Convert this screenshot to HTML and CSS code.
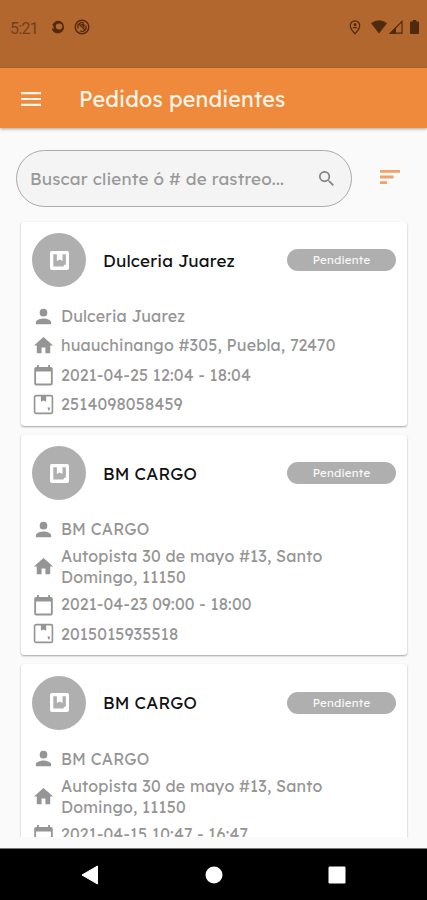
FILE: index.html
```html
<!DOCTYPE html>
<html lang="es">
<head>
<meta charset="utf-8">
<meta name="viewport" content="width=device-width, initial-scale=1">
<title>Pedidos pendientes</title>
<link rel="stylesheet" href="styles.css">
</head>
<body>
<svg class="defs" aria-hidden="true">
  <symbol id="box" viewBox="0 0 20 20"><path fill-rule="evenodd" d="M2 0H18Q20 0 20 2V18Q20 20 18 20H2Q0 20 0 18V2Q0 0 2 0ZM3.500 3.500V16.300H14L15 14.500H16.700V3.500H13.200V10.500L10.200 9L7.200 10.500V3.500Z"/></symbol>
  <symbol id="person" viewBox="0 0 24 24"><path d="M12 12a4 4 0 1 0 0-8 4 4 0 0 0 0 8zm0 2c-2.670 0-8 1.340-8 4v2h16v-2c0-2.660-5.330-4-8-4z"/></symbol>
  <symbol id="home" viewBox="0 0 24 24"><path d="M10 20v-6h4v6h5v-8h3L12 3 2 12h3v8z"/></symbol>
  <symbol id="calendar" viewBox="-.4 -1.200 24.800 24.800"><path d="M20 3h-1V1h-2v2H7V1H5v2H4a2 2 0 0 0-2 2v16a2 2 0 0 0 2 2h16a2 2 0 0 0 2-2V5a2 2 0 0 0-2-2zm0 18H4V8h16z"/></symbol>
  <symbol id="package" viewBox="0 0 24 24"><rect x="2.700" y="2.700" width="18.600" height="18.600" rx="1.500" fill="none" stroke="currentColor" stroke-width="1.700"/><path d="M9.300 3h5.500v6l-2.750-1.200L9.300 9zM16.200 15h2.800l-.9 3.200h-1z"/></symbol>
</svg>
<div class="screen">
  <header class="status">
    <span class="clock">5:21</span>
    <svg class="st-swirl" viewBox="0 0 14 14"><path fill-rule="evenodd" d="M1 4.500C3 4 3 1 7 .7c3 0 6 2.300 6 6.300s-3 6.300-6.500 6.300C3 13.300.8 10.500 1 8l2 1.500C2 7 3 5.500 1 4.500zM8 3.500a3.300 3 0 1 0 .1 6 3.300 3 0 0 0-.1-6z"/></svg>
    <svg class="st-sync" viewBox="0 0 16 16"><circle cx="8" cy="8" r="6.800" fill="none" stroke="currentColor" stroke-width="1.400"/><path d="M4.300 9.500a4 4 0 0 1 5.700-5.200M11.700 6.500a4 4 0 0 1-5.700 5.200M4.500 4.500l7 7" fill="none" stroke="currentColor" stroke-width="1.200"/><path d="M6.500 5h4v4z"/></svg>
    <svg class="st-pin" viewBox="0 0 12 15"><path d="M6 .8a4.700 4.700 0 0 0-4.700 4.800C1.300 9.200 6 13.800 6 13.800s4.700-4.600 4.700-8.200A4.700 4.700 0 0 0 6 .8z" fill="none" stroke="currentColor" stroke-width="1.200"/><circle cx="6" cy="4.700" r="1.400"/><path d="M3.600 8.300a2.500 2 0 0 1 4.800 0z"/></svg>
    <svg class="st-wifi" viewBox="0 0 16 14"><path d="M0 3.200Q8-2.600 16 3.200L8 13.500z"/></svg>
    <svg class="st-signal" viewBox="0 0 14 14"><path d="M1.500 13.200H13V1.300z" fill="none" stroke="currentColor" stroke-width="1.200"/><path d="M0 14L7 7v7z"/></svg>
    <svg class="st-battery" viewBox="0 0 9 14"><path d="M2.700 0h3.600v1.500H8q1 0 1 1V13q0 1-1 1H1q-1 0-1-1V2.500q0-1 1-1h1.700z"/></svg>
  </header>
  <div class="appbar">
    <svg class="menu" viewBox="0 0 20 14"><path d="M0 0h20v2.200H0zM0 5.900h20v2.200H0zM0 11.800h20V14H0z"/></svg>
    <h1 class="title">Pedidos pendientes</h1>
  </div>
  <main class="content">
    <div class="tools">
      <div class="search">
        <span class="placeholder">Buscar cliente ó # de rastreo...</span>
        <svg class="search-icon" viewBox="3 3 17.500 17.500"><path d="M15.500 14h-.79l-.28-.27a6.500 6.500 0 1 0-.7.7l.27.28v.79l5 4.990L20.490 19zM9.500 14a4.500 4.500 0 1 1 0-9 4.500 4.500 0 0 1 0 9z"/></svg>
      </div>
      <svg class="sort" viewBox="0 0 20 14"><path d="M0 0h20v2.800H0zM0 5.600h13.500v2.800H0zM0 11.200h7V14H0z"/></svg>
    </div>
    <div class="list">
      <article class="card">
        <div class="head">
          <div class="avatar"><svg><use href="#box"/></svg></div>
          <h2 class="name">Dulceria Juarez</h2>
          <span class="badge">Pendiente</span>
        </div>
        <div class="row"><svg><use href="#person"/></svg><span>Dulceria Juarez</span></div>
        <div class="row"><svg><use href="#home"/></svg><span>huauchinango #305, Puebla, 72470</span></div>
        <div class="row"><svg><use href="#calendar"/></svg><span>2021-04-25 12:04 - 18:04</span></div>
        <div class="row"><svg><use href="#package"/></svg><span>2514098058459</span></div>
      </article>
      <article class="card">
        <div class="head">
          <div class="avatar"><svg><use href="#box"/></svg></div>
          <h2 class="name">BM CARGO</h2>
          <span class="badge">Pendiente</span>
        </div>
        <div class="row"><svg><use href="#person"/></svg><span>BM CARGO</span></div>
        <div class="row"><svg><use href="#home"/></svg><span>Autopista 30 de mayo #13, Santo<br>Domingo, 11150</span></div>
        <div class="row"><svg><use href="#calendar"/></svg><span>2021-04-23 09:00 - 18:00</span></div>
        <div class="row"><svg><use href="#package"/></svg><span>2015015935518</span></div>
      </article>
      <article class="card">
        <div class="head">
          <div class="avatar"><svg><use href="#box"/></svg></div>
          <h2 class="name">BM CARGO</h2>
          <span class="badge">Pendiente</span>
        </div>
        <div class="row"><svg><use href="#person"/></svg><span>BM CARGO</span></div>
        <div class="row"><svg><use href="#home"/></svg><span>Autopista 30 de mayo #13, Santo<br>Domingo, 11150</span></div>
        <div class="row"><svg><use href="#calendar"/></svg><span>2021-04-15 10:47 - 16:47</span></div>
      </article>
    </div>
  </main>
  <nav class="navbar">
    <svg class="back" viewBox="0 0 20 20"><path d="M17.500 1v18L2 10z" stroke="#fff" stroke-linejoin="round"/></svg>
    <svg viewBox="0 0 20 20"><circle cx="10" cy="10" r="8.500"/></svg>
    <svg viewBox="0 0 20 20"><rect x="1.500" y="1.500" width="17" height="17" rx="1.200"/></svg>
  </nav>
</div>
</body>
</html>
```
FILE: styles.css
```css
* { box-sizing: border-box; }
body {
  margin: 0;
  background: #fafafa;
  font-family: Lexend, Inter, "Open Sans", sans-serif;
}
svg { display: block; fill: currentColor; flex: none; }
.defs { position: absolute; width: 0; height: 0; }
.screen { width: 427px; height: 900px; display: flex; flex-direction: column; overflow: hidden; }

.status {
  height: 68px;
  flex: none;
  display: flex;
  align-items: flex-start;
  padding: 20px 8px 0 10px;
  background: #b1672d;
  color: #51290f;
}
.clock { width: 41px; font: 16px/17px Roboto, sans-serif; letter-spacing: -.7px; color: #71401c; }
.st-swirl { width: 14px; height: 14px; }
.st-sync { width: 16px; height: 16px; margin: -1px 0 0 9px; }
.st-pin { width: 12px; height: 15px; margin-left: auto; }
.st-wifi { width: 16px; height: 14px; margin-left: 10px; }
.st-signal { width: 14px; height: 14px; margin-left: 2px; }
.st-battery { width: 9px; height: 14px; margin: 0 0 0 7px; }

.appbar {
  height: 60px;
  flex: none;
  display: flex;
  align-items: center;
  padding-left: 21px;
  background: #ef893b;
  color: #fff5ea;
  box-shadow: 0 1px 3px rgba(0, 0, 0, .35);
  z-index: 1;
}
.menu { width: 20px; height: 14px; margin-top: 2px; }
.title { margin: 2px 0 0 38px; font-size: 21.5px; line-height: 26px; font-weight: 400; letter-spacing: .15px; }

.content { height: 709px; flex: none; overflow: hidden; padding-top: 22px; }
.tools { display: flex; align-items: center; height: 57px; padding-left: 16px; }
.search {
  width: 336px;
  height: 57px;
  display: flex;
  align-items: center;
  justify-content: space-between;
  padding: 0 17px 0 13px;
  border: 1px solid #aaa;
  border-radius: 29px;
  background: #f4f4f4;
  color: #999;
}
.placeholder { font-size: 17px; letter-spacing: .18px; white-space: nowrap; }
.search-icon { width: 15px; height: 15px; color: #858585; }
.sort { width: 20px; height: 14px; margin: -4px 0 0 28px; color: #f0a269; }

.list { display: flex; flex-direction: column; gap: 9px; padding: 15px 20px 0 21px; }
.card {
  padding: 11.4px 11px 7.1px;
  background: #fff;
  border-radius: 3px;
  box-shadow: 0 1px 2px rgba(0, 0, 0, .35);
}
.head { display: flex; align-items: center; height: 54px; margin-bottom: 14.5px; }
.avatar {
  width: 54px;
  height: 54px;
  display: grid;
  place-items: center;
  border-radius: 50%;
  background: #afafaf;
  color: #fff;
}
.avatar svg { width: 19px; height: 19px; }
.name { margin: 1px auto 0 17px; font-size: 17px; line-height: 24px; font-weight: 400; letter-spacing: .2px; color: #111; white-space: nowrap; }
.badge {
  width: 109px;
  height: 22px;
  border-radius: 11px;
  background: #afafaf;
  color: #f8f8f8;
  font-size: 11.5px;
  line-height: 22px;
  font-weight: 400;
  letter-spacing: .2px;
  text-align: center;
}
.row {
  display: flex;
  align-items: center;
  padding: 2.6px 0;
  min-height: 29.2px;
  gap: 6px;
  color: #959595;
  font-size: 16px;
  line-height: 20.5px;
  letter-spacing: .18px;
  white-space: nowrap;
}
.row svg { width: 23px; height: 23px; }

.navbar {
  height: 52px;
  flex: none;
  display: flex;
  align-items: center;
  justify-content: center;
  gap: 103px;
  margin-top: 11px;
  border-top: 1px solid #777;
  background: #000;
  color: #fff;
}
.navbar svg { width: 20px; height: 20px; }
.navbar .back { margin: 0 1px 0 -1px; }
```
